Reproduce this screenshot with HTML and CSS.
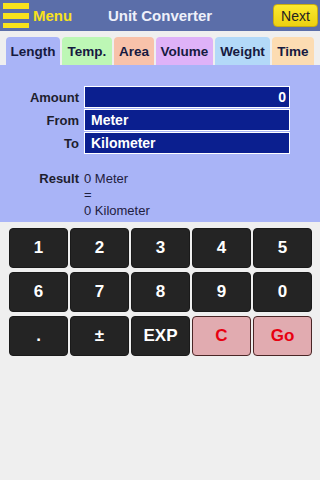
FILE: index.html
```html
<!DOCTYPE html>
<html>
<head>
<meta charset="utf-8">
<link rel="stylesheet" href="styles.css">
</head>
<body>
<div class="header">
  <div class="menu">
    <span class="burger"><i></i><i></i><i></i></span>
    <span class="menu-label">Menu</span>
  </div>
  <div class="title">Unit Converter</div>
  <div class="right"><button class="next">Next</button></div>
</div>
<div class="tabs">
  <div class="tab t-length">Length</div>
  <div class="tab t-temp">Temp.</div>
  <div class="tab t-area">Area</div>
  <div class="tab t-volume">Volume</div>
  <div class="tab t-weight">Weight</div>
  <div class="tab t-time">Time</div>
</div>
<div class="panel">
  <div class="form">
    <div class="label">Amount</div><div class="field num">0</div>
    <div class="label">From</div><div class="field">Meter</div>
    <div class="label">To</div><div class="field">Kilometer</div>
  </div>
  <div class="result">
    <div class="rlabel">Result</div>
    <div class="rvals">
      <div>0 Meter</div>
      <div>=</div>
      <div>0 Kilometer</div>
    </div>
  </div>
</div>
<div class="keypad">
  <button class="key">1</button>
  <button class="key">2</button>
  <button class="key">3</button>
  <button class="key">4</button>
  <button class="key">5</button>
  <button class="key">6</button>
  <button class="key">7</button>
  <button class="key">8</button>
  <button class="key">9</button>
  <button class="key">0</button>
  <button class="key">.</button>
  <button class="key">±</button>
  <button class="key">EXP</button>
  <button class="key action">C</button>
  <button class="key action">Go</button>
</div>
</body>
</html>
```
FILE: styles.css
```css
* { box-sizing: border-box; }
html, body {
  margin: 0;
  padding: 0;
  width: 320px;
  height: 480px;
  background: #efefef;
  font-family: "Liberation Sans", Arial, sans-serif;
  overflow: hidden;
}
.header {
  height: 31px;
  background: #5b6ea9;
  display: grid;
  grid-template-columns: 1fr auto 1fr;
  align-items: center;
}
.menu {
  display: flex;
  align-items: center;
  padding-left: 3px;
}
.burger {
  display: flex;
  flex-direction: column;
  gap: 4px;
  width: 26px;
}
.burger i {
  display: block;
  height: 6px;
  background: #f8e21c;
}
.burger i:last-child { height: 5px; }
.menu-label {
  color: #f8e21c;
  font-weight: bold;
  font-size: 15px;
  margin-left: 4px;
}
.title {
  color: #eef0fa;
  font-weight: bold;
  font-size: 15px;
}
.right {
  display: flex;
  justify-content: flex-end;
  padding-right: 2px;
}
.next {
  width: 45px;
  height: 23px;
  border: 1px solid #c9ad10;
  border-radius: 4px;
  background: linear-gradient(#fbe930, #ecd010);
  font-family: "Liberation Sans", Arial, sans-serif;
  font-size: 14px;
  color: #222;
  padding: 0;
}
.tabs {
  height: 34px;
  display: flex;
  align-items: flex-end;
  gap: 2px;
  padding-left: 6px;
}
.tab {
  height: 28px;
  border-radius: 4px 4px 0 0;
  display: flex;
  align-items: center;
  justify-content: center;
  font-weight: bold;
  font-size: 13.5px;
  color: #161a40;
}
.t-length { width: 54px; background: #a9b4f7; }
.t-temp { width: 50px; background: #bdf7b5; }
.t-area { width: 40px; background: #f8c2aa; }
.t-volume { width: 57px; background: #dfb2f8; }
.t-weight { width: 55px; background: #b3d9f8; }
.t-time { width: 42px; background: #fcdcb2; }
.panel {
  height: 157px;
  background: #a9b4f7;
  padding-top: 21px;
}
.form {
  display: grid;
  grid-template-columns: 79px 206px;
  column-gap: 5px;
  row-gap: 1px;
}
.label {
  text-align: right;
  font-weight: bold;
  font-size: 13px;
  color: #1e1e2e;
  align-self: center;
}
.field {
  height: 22px;
  background: #0b1f8f;
  border: 1px solid #ffffff;
  color: #ffffff;
  font-weight: bold;
  font-size: 14px;
  display: flex;
  align-items: center;
  padding: 0 6px;
}
.field.num {
  justify-content: flex-end;
  padding-right: 3px;
}
.result {
  display: flex;
  margin-top: 17px;
  font-size: 13px;
  line-height: 16px;
  color: #1e2040;
}
.rlabel {
  width: 79px;
  text-align: right;
  font-weight: bold;
  color: #1e1e2e;
}
.rvals { margin-left: 5px; }
.keypad {
  display: grid;
  grid-template-columns: repeat(5, 59px);
  grid-auto-rows: 40px;
  column-gap: 2px;
  row-gap: 4px;
  padding: 6px 0 0 9px;
}
.key {
  background: #242424;
  border: 1px solid #1a1a1a;
  border-radius: 4px;
  color: #ffffff;
  font-family: "Liberation Sans", Arial, sans-serif;
  font-weight: bold;
  font-size: 17px;
  padding: 0;
}
.key.action {
  background: #e1abb0;
  border: 1px solid #4a2626;
  color: #e80010;
}
```
